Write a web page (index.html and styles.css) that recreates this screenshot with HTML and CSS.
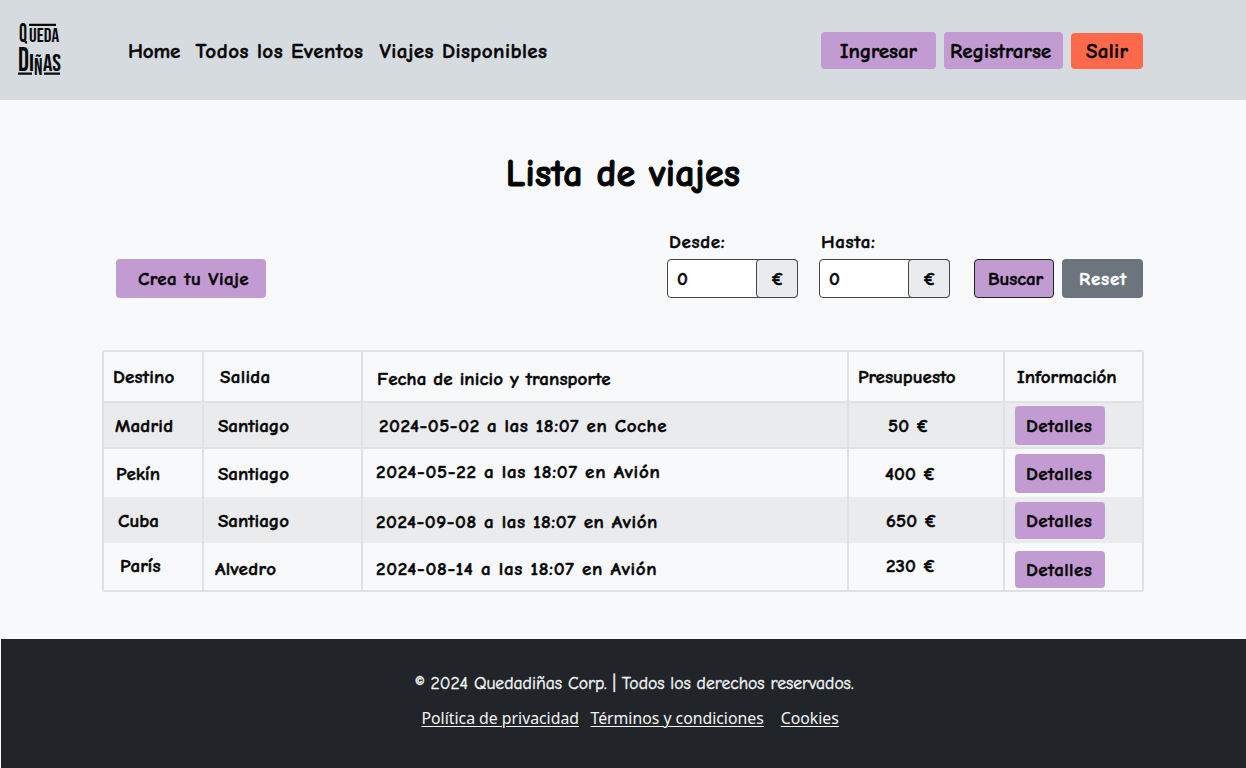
FILE: index.html
```html
<!DOCTYPE html>
<html lang="es">
<head>
<meta charset="utf-8">
<title>Quedadiñas - Lista de viajes</title>
<link rel="stylesheet" href="styles.css">
</head>
<body>
<header class="header">
  <svg class="logo" width="48" height="58" viewBox="0 0 48 58">
    <g class="logo-text">
      <text x="2" y="19.5" font-size="26" textLength="8" lengthAdjust="spacingAndGlyphs">Q</text>
      <text x="12" y="19.5" font-size="19" textLength="30" lengthAdjust="spacing">UEDA</text>
      <text x="1" y="49" font-size="33" textLength="11" lengthAdjust="spacingAndGlyphs">D</text>
      <text x="12" y="49" font-size="24" textLength="5" lengthAdjust="spacingAndGlyphs">I</text>
      <text x="17" y="53" font-size="24" textLength="8.5" lengthAdjust="spacingAndGlyphs">Ñ</text>
      <text x="26" y="49" font-size="24" textLength="18" lengthAdjust="spacingAndGlyphs">AS</text>
    </g>
    <path class="logo-bars" d="M12 1.7h27v2.2H12zM1 50.5h14v2.3H1zM27 50.5h16v2.3H27z"/>
  </svg>
  <nav class="nav">
    <a class="nav-home">Home</a>
    <a class="nav-events">Todos los Eventos</a>
    <a class="nav-trips">Viajes Disponibles</a>
  </nav>
  <div class="account">
    <button class="btn btn-login">Ingresar</button>
    <button class="btn btn-register">Registrarse</button>
    <button class="btn btn-exit">Salir</button>
  </div>
</header>
<main class="main">
  <h1 class="title">Lista de viajes</h1>
  <div class="toolbar">
    <button class="btn btn-create">Crea tu Viaje</button>
    <div class="field field-from">
      <label class="label">Desde:</label>
      <div class="group"><span class="value">0</span><span class="unit">€</span></div>
    </div>
    <div class="field field-to">
      <label class="label">Hasta:</label>
      <div class="group"><span class="value">0</span><span class="unit">€</span></div>
    </div>
    <button class="btn btn-search">Buscar</button>
    <button class="btn btn-reset">Reset</button>
  </div>
  <div class="table">
    <div class="row row-head">
      <div class="cell w2">Destino</div><div class="cell w3 in-16">Salida</div><div class="cell w1 in-14 low">Fecha de inicio y transporte</div><div class="cell">Presupuesto</div><div class="cell">Información</div>
    </div>
    <div class="row row-1">
      <div class="cell w2 in-12">Madrid</div><div class="cell in-14">Santiago</div><div class="cell w6 in-16">2024-05-02 a las 18:07 en Coche</div><div class="cell w1 in-40">50 €</div><div class="cell"><button class="btn btn-details">Detalles</button></div>
    </div>
    <div class="row row-2">
      <div class="cell in-13">Pekín</div><div class="cell in-14">Santiago</div><div class="cell w7 in-13 high">2024-05-22 a las 18:07 en Avión</div><div class="cell w1 in-37">400 €</div><div class="cell"><button class="btn btn-details">Detalles</button></div>
    </div>
    <div class="row row-3">
      <div class="cell in-15">Cuba</div><div class="cell in-14">Santiago</div><div class="cell w6 in-13 low">2024-09-08 a las 18:07 en Avión</div><div class="cell w1 in-38">650 €</div><div class="cell"><button class="btn btn-details short">Detalles</button></div>
    </div>
    <div class="row row-4">
      <div class="cell in-16 high">París</div><div class="cell w3 in-11 low">Alvedro</div><div class="cell w7 in-13 low">2024-08-14 a las 18:07 en Avión</div><div class="cell w1 in-38 high">230 €</div><div class="cell drop"><button class="btn btn-details short">Detalles</button></div>
    </div>
  </div>
</main>
<footer class="footer">
  <p class="copyright">© 2024 Quedadiñas Corp. | Todos los derechos reservados.</p>
  <div class="links">
    <a class="link link-privacy">Política de privacidad</a>
    <a class="link link-terms">Términos y condiciones</a>
    <a class="link">Cookies</a>
  </div>
</footer>
</body>
</html>
```
FILE: styles.css
```css
* { box-sizing: border-box; }
body {
  margin: 0;
  height: 768px;
  display: flex;
  flex-direction: column;
  background: #f8f9fb;
  color: #060606;
  font: 700 19px/24px "Comic Neue", "Noto Sans", sans-serif;
  -webkit-text-stroke: .45px currentColor;
}
.header {
  height: 100px;
  flex: none;
  display: flex;
  align-items: flex-start;
  background: #d6dbdf;
}
.logo { margin: 22px 0 0 17px; flex: none; overflow: visible; -webkit-text-stroke: 0; }
.logo-text { font-family: "Bebas Neue", "Oswald", sans-serif; font-weight: 400; fill: #0a0a0a; }
.logo-bars { fill: #0a0a0a; }
.nav {
  display: flex;
  margin: 39px 0 0 63px;
  font-size: 21px;
  white-space: nowrap;
}
.nav-home { width: 67.5px; letter-spacing: -.2px; }
.nav-events { width: 184px; letter-spacing: .5px; }
.nav-trips { letter-spacing: .45px; }
.account { display: flex; margin: 32px 103px 0 auto; }
.btn {
  display: flex;
  align-items: center;
  justify-content: flex-start;
  margin: 0;
  padding: 1px 0 0;
  border: 0;
  border-radius: 4px;
  background: #c29bd3;
  color: #060606;
  font: inherit;
  white-space: nowrap;
  -webkit-text-stroke: .45px currentColor;
}
.account .btn { height: 37px; font-size: 21px; }
.btn-login { width: 115px; padding-left: 19px; margin-right: 8px; letter-spacing: -.1px; }
.btn-register { width: 119px; padding-left: 6px; margin-right: 8px; }
.account .btn-exit { width: 72px; height: 36px; margin-top: 1px; padding: 0 0 0 15px; background: #ff694b; letter-spacing: .3px; }
.main { height: 539px; flex: none; }
.title {
  margin: 50px 0 0;
  font-size: 38px;
  line-height: 48px;
  letter-spacing: .25px;
  text-align: center;
  -webkit-text-stroke-width: 1px;
}
.toolbar {
  display: flex;
  align-items: flex-end;
  margin: 31px 103px 0 116px;
  height: 69px;
}
.btn-create { width: 150px; height: 39px; padding-left: 22px; letter-spacing: .4px; }
.field { display: flex; flex-direction: column; }
.field-from { margin-left: auto; margin-right: 21px; }
.field-to { margin-right: 24px; }
.label { padding-left: 2px; margin-bottom: 5px; letter-spacing: .65px; }
.group {
  width: 131px;
  height: 39px;
  display: flex;
  border: 1px solid #444;
  border-radius: 4px;
  background: #fff;
}
.value { flex: 1; padding: 7px 0 0 9px; }
.unit {
  width: 42px;
  margin: -1px;
  padding: 7px 0 0 14px;
  border: 1px solid #444;
  border-radius: 4px;
  background: #e9ecef;
}
.btn-search { width: 80px; height: 39px; margin-right: 8px; padding-left: 13px; border: 1px solid #222; letter-spacing: -.1px; }
.btn-reset { width: 81px; height: 39px; padding-left: 17px; background: #6c757d; color: #fff; letter-spacing: .8px; }
.table {
  width: 1042px;
  margin: 52px 0 0 102px;
  border: 2px solid #dfe1e6;
  border-radius: 2px;
}
.row { display: grid; grid-template-columns: 100px 159px 486px 156px 137px; }
.row-head { height: 49px; }
.row-1 { height: 48px; background: #eaebed; border-top: 2px solid #dfe1e6; border-bottom: 2px solid #dfe1e6; }
.row-2 { height: 48px; }
.row-3 { height: 46px; background: #eaebed; }
.row-4 { height: 47px; }
.cell {
  display: flex;
  align-items: center;
  padding: 1px 0 0 9px;
  border-right: 2px solid #dfe1e6;
  white-space: nowrap;
}
.cell:last-child { padding-top: 0; border-right: 0; padding-left: 10px; }
.row-head .cell:last-child { padding-top: 1px; padding-left: 12px; }
.cell.in-11 { padding-left: 11px; }
.cell.in-12 { padding-left: 11px; }
.cell.in-13 { padding-left: 12px; }
.cell.in-14 { padding-left: 14px; }
.cell.in-15 { padding-left: 14px; }
.cell.in-16 { padding-left: 16px; }
.row-1 .cell.in-16 { padding-left: 16px; }
.row-2 .cell.in-13:nth-child(3), .row-3 .cell.in-13, .row-4 .cell.in-13 { padding-left: 13px; }
.cell.in-37 { padding-left: 36px; }
.cell.in-38 { padding-left: 37px; }
.cell.in-40 { padding-left: 39px; }
.cell.low { padding-top: 4px; }
.cell.high { padding-top: 0; padding-bottom: 2px; }
.cell.drop:last-child { padding-top: 5px; }
.w1 { letter-spacing: .1px; }
.w2 { letter-spacing: .2px; }
.w3 { letter-spacing: .3px; }
.w6 { letter-spacing: .57px; }
.w7 { letter-spacing: .7px; }
.btn-details { width: 90px; height: 39px; padding-left: 11px; letter-spacing: .4px; }
.btn-details.short { height: 37px; }
.footer {
  flex: 1;
  margin-left: 1px;
  background: #212529;
  color: #f4f5f5;
  -webkit-text-stroke: 0;
}
.copyright {
  margin: 32px 0 0 414px;
  font-size: 17.6px;
  font-weight: 400;
  -webkit-text-stroke: .4px #f4f5f5;
  white-space: nowrap;
}
.links {
  display: flex;
  margin: 12px 0 0 420.5px;
  font: 400 15.8px/22px "Noto Sans", sans-serif;
  white-space: nowrap;
}
.link { text-decoration: underline; text-underline-offset: 2px; text-decoration-thickness: 1px; }
.link-privacy { margin-right: 11.5px; }
.link-terms { margin-right: 17px; }
```
